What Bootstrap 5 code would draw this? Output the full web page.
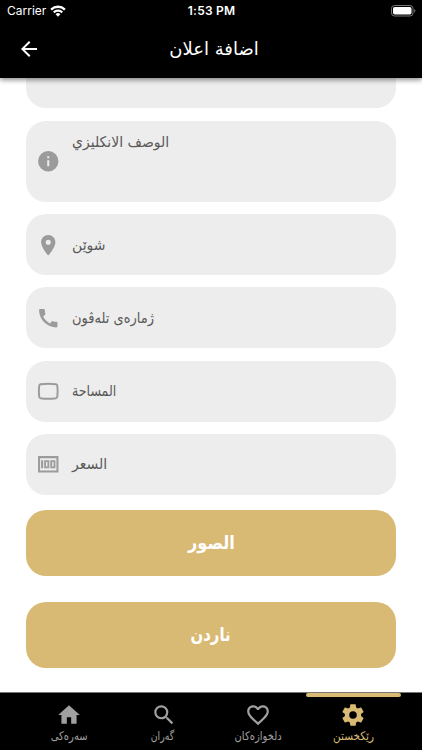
<!DOCTYPE html>
<html lang="ckb">
<head>
<meta charset="utf-8">
<meta name="viewport" content="width=device-width, initial-scale=1">
<title>اضافة اعلان</title>
<link href="https://cdn.jsdelivr.net/npm/bootstrap@5.3.0/dist/css/bootstrap.min.css" rel="stylesheet">
<style>
body{height:750px;font-family:"DejaVu Sans",sans-serif;background:#fff}
svg{display:block;fill:currentColor;flex:none}
.topbar{height:78px;background:#000;box-shadow:0 2px 5px rgba(0,0,0,.45);z-index:2}
.status{height:21px;font:12px/21px Inter,sans-serif;padding:0 6px 0 7px}
.status .side{flex:1 1 0}
.status b{font-weight:600;font-size:12px;letter-spacing:.2px}
.titlebar{height:56px}
.titlebar svg{width:24px;height:24px;margin-left:17px}
.titlebar h1{font-size:18px;line-height:24px;padding-left:5px}
.form-area{height:614px;padding:0 26px}
.field{height:61px;border-radius:20px;background:#ededed;color:#5a5a5a;padding-left:10px;gap:12px;margin-bottom:12.2px;font-size:14px;line-height:20px}
.field svg{width:24.500px;height:24.500px;color:#9b9b9b;margin-right:-.5px}
.field.cut{height:30px;border-radius:0 0 20px 20px;margin-bottom:12.8px}
.field.tall{height:81px;margin-bottom:12.5px}
.field.tall bdi{align-self:flex-start;margin-top:11px}
.gold{height:66px;border-radius:20px;background:#d9ba74;color:#fff;font-size:17.5px;font-weight:700;border:0}
.gold:hover{background:#d9ba74;color:#fff}
.first{margin-top:3.2px;margin-bottom:25.5px}
.tabs{height:58px;background:#000;padding:0 21.5px;border-top:1px solid #777}
.tabs a{flex:1 1 0;color:#a0a0a0;font-size:11.5px;line-height:16px;padding-top:9px}
.tabs svg{width:26px;height:26px}
.tabs a.on{color:#d9ba74}
.tabs a.on::before{content:"";position:absolute;top:0;left:0;right:0;height:4px;border-radius:2px;background:#d9ba74}
bdi{display:inline-block;white-space:nowrap;transform-origin:0 50%}
h1 bdi,.gold bdi,.tabs bdi{transform-origin:50% 50%}
.phone bdi{transform:scale(.93,1.08)}
.area bdi{transform:scale(.9,1.08)}
.price bdi,.place bdi,.tall bdi{transform:scale(1,1.06)}
.gold bdi{transform:scale(.92,1.05)}
.gold.send bdi{transform:scale(.85,1.05)}
.tabs bdi{transform:scale(.87,1.04)}
.tabs .search bdi{transform:scale(.81,1.04);position:relative;left:-1px}
.tabs .on bdi{transform:scale(.91,1.04)}
</style>
<script src="https://cdn.jsdelivr.net/npm/bootstrap@5.3.0/dist/js/bootstrap.bundle.min.js"></script>
</head>
<body class="d-flex flex-column overflow-hidden">
<header class="topbar position-relative text-white flex-shrink-0">
  <div class="status d-flex align-items-center">
    <div class="side d-flex align-items-center gap-1"><span>Carrier</span>
      <svg width="16" height="12" viewBox="0 0 16 12"><path d="M8 11.8 5.6 9.2a3.5 3.5 0 0 1 4.8 0zM3 6.5a7.2 7.2 0 0 1 10 0l-1.5 1.7a5 5 0 0 0-7 0zM.3 3.7a11.1 11.1 0 0 1 15.4 0l-1.6 1.7a8.800 8.800 0 0 0-12.2 0z"/></svg>
    </div>
    <b>1:53 PM</b>
    <div class="side d-flex justify-content-end">
      <svg width="25" height="12" viewBox="0 0 25 12"><rect x=".5" y=".5" width="21.5" height="10.5" rx="3" fill="none" stroke="#777"/><rect x="2" y="2" width="18.5" height="7.5" rx="1.7"/><path d="M23.2 4c1.6.6 1.6 3 0 3.6z" fill="#777"/></svg>
    </div>
  </div>
  <div class="titlebar d-flex align-items-center">
    <svg viewBox="0 0 24 24"><path d="M20 11H7.83l5.59-5.59L12 4l-8 8 8 8 1.41-1.41L7.83 13H20z"/></svg>
    <h1 class="m-0 flex-grow-1 text-center fw-normal"><bdi>اضافة اعلان</bdi></h1><span class="pe-4 me-3"></span>
  </div>
</header>
<main class="form-area d-flex flex-column flex-shrink-0">
  <div class="field cut"></div>
  <div class="field tall d-flex align-items-center">
    <svg viewBox="0 0 24 24"><path d="M12 2a10 10 0 1 0 0 20 10 10 0 0 0 0-20zm1 15h-2v-6h2zm0-8h-2V7h2z"/></svg><bdi>الوصف الانكليزي</bdi>
  </div>
  <div class="field place d-flex align-items-center">
    <svg viewBox="0 0 24 24"><path d="M12 2C8.13 2 5 5.13 5 9c0 5.25 7 13 7 13s7-7.75 7-13c0-3.87-3.13-7-7-7zm0 9.5a2.5 2.5 0 0 1 0-5 2.5 2.5 0 0 1 0 5z"/></svg><bdi>شوێن</bdi>
  </div>
  <div class="field phone d-flex align-items-center">
    <svg viewBox="0 0 24 24"><path d="M20.010 15.380c-1.230 0-2.420-.2-3.530-.56-.35-.12-.740-.03-1.010.24l-1.570 1.970c-2.830-1.350-5.480-3.900-6.890-6.830l1.950-1.660c.27-.28.35-.67.240-1.020-.37-1.110-.56-2.300-.56-3.530 0-.540-.45-.990-.990-.990H4.190C3.650 3 3 3.240 3 3.990 3 13.280 10.730 21 20.010 21c.710 0 .990-.630.990-1.180v-3.450c0-.540-.45-.990-.990-.990z"/></svg><bdi>ژمارەی تلەڤون</bdi>
  </div>
  <div class="field area d-flex align-items-center">
    <svg viewBox="0 0 24 24"><path d="M4.500 5.200Q12 4 19.500 5.200Q20.700 5.500 20.900 6.800Q21.500 12 20.900 17.200Q20.700 18.500 19.500 18.800Q12 20 4.500 18.800Q3.300 18.500 3.100 17.200Q2.500 12 3.100 6.800Q3.300 5.500 4.500 5.200Z" fill="none" stroke="currentColor" stroke-width="1.900"/></svg><bdi>المساحة</bdi>
  </div>
  <div class="field price d-flex align-items-center">
    <svg viewBox="0 0 24 24"><path fill-rule="evenodd" d="M2 4h20v16H2zM4 6v12h16V6zM5 8h2v8H5zM8 8h5v8H8zM14 8h5v8h-5zM9.800 9.800v4.400h1.400V9.800zM15.800 9.800v4.400h1.400V9.800z"/></svg><bdi>السعر</bdi>
  </div>
  <button class="gold btn first p-0"><bdi>الصور</bdi></button>
  <button class="gold send btn p-0"><bdi>ناردن</bdi></button>
</main>
<nav class="tabs d-flex flex-shrink-0">
  <a class="d-flex flex-column align-items-center text-decoration-none"><svg viewBox="0 0 24 24"><path d="M10 20v-6h4v6h5v-8h3L12 3 2 12h3v8z"/></svg><bdi>سەرەکی</bdi></a>
  <a class="search d-flex flex-column align-items-center text-decoration-none"><svg viewBox="0 0 24 24"><path d="M15.500 14h-.790l-.28-.27A6.470 6.470 0 0 0 16 9.500 6.500 6.500 0 1 0 9.500 16c1.610 0 3.090-.590 4.230-1.570l.27.28v.790l5 4.990L20.490 19zm-6 0a4.500 4.500 0 1 1 0-9 4.500 4.500 0 0 1 0 9z"/></svg><bdi>گەران</bdi></a>
  <a class="d-flex flex-column align-items-center text-decoration-none"><svg viewBox="0 0 24 24"><path d="M16.500 3c-1.740 0-3.410.81-4.500 2.090C10.910 3.810 9.240 3 7.500 3 4.420 3 2 5.420 2 8.500c0 3.780 3.400 6.860 8.550 11.540L12 21.350l1.450-1.320C18.600 15.360 22 12.280 22 8.500 22 5.420 19.580 3 16.500 3zm-4.400 15.550-.1.100-.1-.1C7.140 14.240 4 11.390 4 8.500 4 6.500 5.500 5 7.500 5c1.540 0 3.040.990 3.570 2.360h1.870C13.460 5.990 14.960 5 16.500 5c2 0 3.500 1.500 3.500 3.500 0 2.890-3.140 5.740-7.900 10.050z"/></svg><bdi>دلخوازەکان</bdi></a>
  <a class="on position-relative d-flex flex-column align-items-center text-decoration-none"><svg viewBox="0 0 24 24"><path d="M19.430 12.980c.04-.32.07-.64.07-.98s-.03-.66-.07-.98l2.110-1.650c.19-.15.24-.42.12-.64l-2-3.460c-.12-.22-.39-.3-.61-.22l-2.490 1c-.52-.4-1.080-.73-1.690-.98l-.38-2.650A.49.49 0 0 0 14 2h-4a.49.49 0 0 0-.49.420l-.38 2.650c-.61.25-1.170.590-1.690.980l-2.490-1c-.23-.09-.49 0-.61.22l-2 3.460c-.13.22-.07.49.12.64l2.110 1.650c-.04.32-.07.65-.07.98s.03.66.07.98l-2.110 1.650c-.19.15-.24.42-.12.64l2 3.460c.12.22.39.3.61.22l2.490-1c.52.4 1.080.73 1.690.98l.38 2.650c.03.24.24.42.49.42h4c.25 0 .46-.18.49-.42l.38-2.650c.61-.25 1.170-.590 1.690-.98l2.490 1c.23.09.49 0 .61-.22l2-3.460c.12-.22.07-.49-.12-.64zM12 15.500a3.500 3.500 0 1 1 0-7 3.500 3.500 0 0 1 0 7z"/></svg><bdi>رێکخستن</bdi></a>
</nav>
</body>
</html>
